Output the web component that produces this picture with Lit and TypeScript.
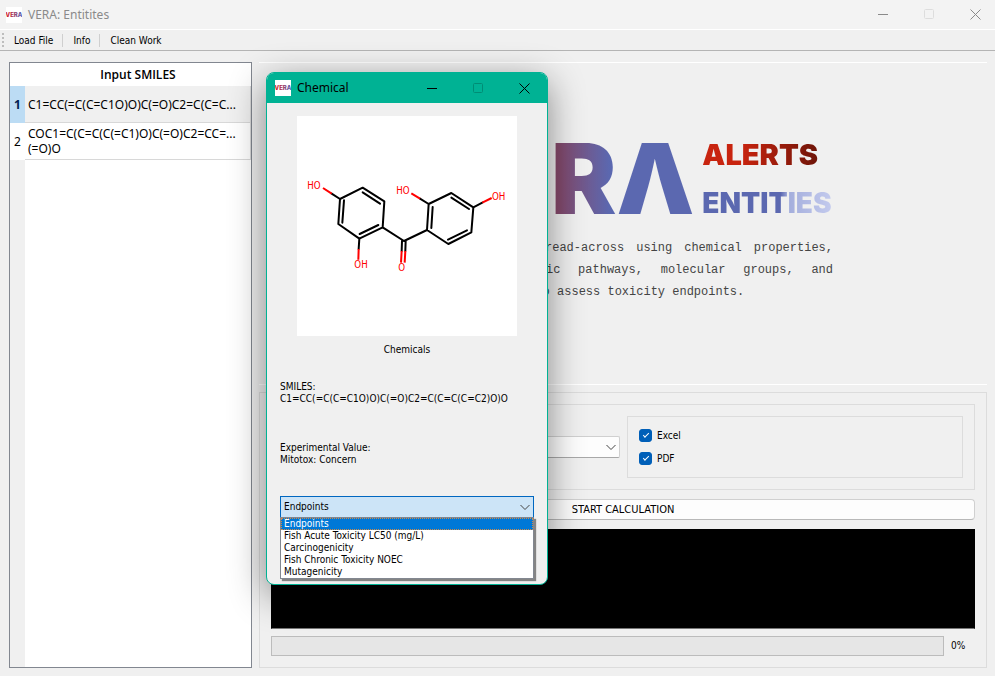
import { LitElement, html, css, svg } from "lit";
import { customElement, property, state } from "lit/decorators.js";
import { classMap } from "lit/directives/class-map.js";

@customElement("window-bar")
class WindowBar extends LitElement {
  @property() label = "";

  static styles = css`
    :host {
      display: flex;
      align-items: center;
      font: 12px/16px "Noto Sans", "Open Sans", sans-serif;
    }
    .icon {
      width: 16px;
      height: 16px;
      margin-right: 6px;
      background: #fff;
      flex: none;
    }
    .title {
      flex: 1;
    }
    button {
      all: unset;
      width: 46px;
      height: 28px;
      display: flex;
      align-items: center;
      justify-content: center;
    }
    .dim {
      opacity: 0.2;
    }
  `;

  render() {
    return html`
      <svg class="icon" viewBox="0 0 16 16" aria-hidden="true">
        <defs>
          <linearGradient id="g">
            <stop offset="0.2" stop-color="#c8202c" />
            <stop offset="1" stop-color="#4a60c0" />
          </linearGradient>
        </defs>
        <text x="8" y="10" text-anchor="middle" font-family="Inter, sans-serif" font-size="6" font-weight="800" fill="url(#g)">VERA</text>
      </svg>
      <span class="title">${this.label}</span>
      <button aria-label="Minimize">
        <svg width="11" height="11"><path d="M0 5.5h10" stroke="currentColor" /></svg>
      </button>
      <button aria-label="Maximize" disabled class="dim">
        <svg width="11" height="11"><rect x="0.5" y="0.5" width="9" height="9" rx="1" fill="none" stroke="currentColor" /></svg>
      </button>
      <button aria-label="Close">
        <svg width="11" height="11"><path d="M0.5 0.5l10 10M10.5 0.5l-10 10" stroke="currentColor" /></svg>
      </button>
    `;
  }
}

@customElement("molecule-view")
class MoleculeView extends LitElement {
  static styles = css`
    :host {
      display: block;
      width: 220px;
      height: 220px;
      background: #fff;
    }
    svg {
      display: block;
    }
    .bond {
      fill: none;
      stroke: #000;
      stroke-width: 6;
      stroke-linecap: round;
      stroke-linejoin: round;
    }
    .oxy {
      fill: none;
      stroke: #f00;
      stroke-width: 6;
    }
    text {
      font: 29px "DejaVu Sans Condensed", "Liberation Sans", sans-serif;
      font-stretch: condensed;
      fill: #f00;
    }
  `;

  render() {
    const labels: [number, number, string][] = [
      [34, 86, "HO"],
      [175, 325, "OH"],
      [307, 333, "O"],
      [301, 102, "HO"],
      [588, 119, "OH"],
    ];
    return html`
      <svg width="220" height="220" viewBox="3 -132 660 660" role="img" aria-label="Chemical structure">
        <path
          class="bond"
          d="M132 117L200 83L265 124L260 202L190 236L127 192Z M200 97L252 131 M247 195L191 222 M144 121L139 188
             M132 117L107 101 M190 236L188 267 M260 202L324 243L393 210
             M393 210L398 132L466 99L532 142L526 217L457 252Z M406 204L410 141 M466 113L519 147 M513 211L456 239
             M398 132L372 116 M532 142L559 128 M318 243L317 273 M329 243L328 273"
        />
        <path
          class="oxy"
          d="M107 101L81 84 M188 267L187 299 M317 273L315 308 M328 273L326 308 M372 116L346 100 M559 128L587 114"
        />
        ${labels.map(([x, y, t]) => svg`<text x=${x} y=${y}>${t}</text>`)}
      </svg>
    `;
  }
}

@customElement("chemical-dialog")
class ChemicalDialog extends LitElement {
  @state() selected = "Endpoints";

  private endpoints = [
    "Endpoints",
    "Fish Acute Toxicity LC50 (mg/L)",
    "Carcinogenicity",
    "Fish Chronic Toxicity NOEC",
    "Mutagenicity",
  ];

  static styles = css`
    :host {
      display: block;
      box-sizing: border-box;
      width: 282px;
      background: #f0f0f0;
      border: 1px solid #00b294;
      border-radius: 8px;
      font: 10px/12px "DejaVu Sans Condensed", "DejaVu Sans", sans-serif;
      font-stretch: condensed;
      box-shadow: 0 10px 36px rgba(0, 0, 0, 0.45);
    }
    .bar {
      height: 30px;
      padding-left: 8px;
      background: #00b294;
      border-radius: 7px 7px 0 0;
    }
    .content {
      display: flex;
      flex-direction: column;
      padding: 13px 13px 66px;
    }
    molecule-view {
      margin-left: 17px;
    }
    .caption {
      margin: 8px 0 25px;
      text-align: center;
    }
    p {
      margin: 0;
      white-space: nowrap;
    }
    .value {
      margin: 37px 0 30px;
    }
    .combo {
      position: relative;
    }
    select {
      appearance: none;
      display: block;
      box-sizing: border-box;
      width: 100%;
      height: 22px;
      padding: 0 3px;
      border: 1px solid #0067c0;
      border-radius: 0;
      background: #cce4f7;
      font: inherit;
      color: #000;
      outline: none;
    }
    .arrow {
      position: absolute;
      right: 4px;
      top: 8px;
      pointer-events: none;
    }
    ul {
      position: absolute;
      left: 0;
      right: 0;
      top: 21px;
      margin: 0;
      padding: 0;
      list-style: none;
      background: #fff;
      border: 1px solid #828790;
      box-shadow: 2px 2px 1px rgba(0, 0, 0, 0.45);
    }
    li {
      padding: 0 3px;
    }
    .current {
      background: #0078d7;
      color: #fff;
      outline: 1px dotted #d08a48;
      outline-offset: -1px;
    }
  `;

  render() {
    return html`
      <window-bar class="bar" label="Chemical"></window-bar>
      <div class="content">
        <molecule-view></molecule-view>
        <div class="caption">Chemicals</div>
        <p>SMILES:<br />C1=CC(=C(C=C1O)O)C(=O)C2=C(C=C(C=C2)O)O</p>
        <p class="value">Experimental Value:<br />Mitotox: Concern</p>
        <div class="combo">
          <select
            aria-label="Endpoints"
            .value=${this.selected}
            @change=${(e: Event) => (this.selected = (e.target as HTMLSelectElement).value)}
          >
            ${this.endpoints.map((e) => html`<option ?selected=${e === this.selected}>${e}</option>`)}
          </select>
          <svg class="arrow" width="10" height="7"><path d="M0.5 1l4.5 4.500L9.5 1" fill="none" stroke="#444" /></svg>
          <ul role="listbox" aria-label="Endpoint list">
            ${this.endpoints.map(
              (e) => html`<li
                role="option"
                aria-selected=${e === this.selected}
                class=${classMap({ current: e === this.selected })}
                @click=${() => (this.selected = e)}
              >${e}</li>`
            )}
          </ul>
        </div>
      </div>
    `;
  }
}

@customElement("app-root")
class AppRoot extends LitElement {
  static styles = css`
    :host {
      display: flex;
      flex-direction: column;
      position: relative;
      box-sizing: border-box;
      min-height: 100vh;
      overflow: clip;
      background: #f0f0f0;
      color: #000;
      font: 10px/12px "DejaVu Sans Condensed", "DejaVu Sans", sans-serif;
      font-stretch: condensed;
    }
    .bar {
      height: 29px;
      margin-right: -3px;
      padding-left: 6px;
      background: #f3f3f3;
      color: #8a8a8a;
      border-bottom: 1px solid #fff;
    }
    .tools {
      display: flex;
      align-items: center;
      height: 20px;
      padding-left: 2px;
      border-bottom: 1px solid #b4b4b4;
    }
    .grip {
      height: 14px;
      border-left: 2px dotted #bdbdbd;
    }
    .tools button {
      all: unset;
      padding: 1px 9px 0 10px;
    }
    .tools button + button {
      border-left: 1px solid #cfcfcf;
    }
    main {
      flex: 1;
      display: flex;
      gap: 7px;
      padding: 11px 8px 8px 9px;
    }
    .inputs {
      box-sizing: border-box;
      flex: 0 0 243px;
      border: 1px solid #828790;
      background: linear-gradient(90deg, #f0f0f0 15px, #fff 15px);
      font: 12px/15px "Noto Sans", "Open Sans", sans-serif;
    }
    table {
      width: 100%;
      table-layout: fixed;
      border-spacing: 0;
    }
    .num {
      width: 15px;
    }
    th,
    td {
      box-sizing: border-box;
      padding: 0;
      background: #fff;
    }
    thead th {
      height: 23px;
      font-weight: 600;
      font-family: "Open Sans", "Noto Sans", sans-serif;
    }
    tbody th {
      height: 37px;
      font-weight: 400;
    }
    td {
      padding: 0 3px;
      border: 1px solid #d8d8d8;
      border-width: 0 1px 1px 0;
      white-space: nowrap;
      overflow: hidden;
    }
    .active td {
      background: #f0f0f0;
    }
    .active th {
      background: #bcdcf4;
      font-weight: 700;
      color: #002050;
    }
    .work {
      flex: 1;
      min-width: 0;
      display: flex;
      flex-direction: column;
    }
    .hero {
      display: flex;
      flex-direction: column;
      align-items: center;
      padding: 78px 0 81px;
      margin-bottom: 7px;
      border-top: 1px solid #fff;
      border-bottom: 1px solid #fff;
    }
    .banner {
      width: 420px;
    }
    .logo {
      display: flex;
      justify-content: flex-end;
      gap: 8px;
      height: 76px;
      margin-bottom: 20px;
      font-family: Inter, sans-serif;
    }
    .big,
    .alerts,
    .entities {
      color: transparent;
      background-clip: text;
      -webkit-background-clip: text;
    }
    .big {
      font-size: 98px;
      line-height: 76px;
      font-weight: 900;
      background-image: linear-gradient(90deg, #c8201c, #844a6c 52%, #5b68b0 70%);
    }
    .words {
      display: flex;
      flex-direction: column;
      justify-content: space-between;
      width: 134px;
      font-size: 29px;
      line-height: 28px;
      font-weight: 900;
    }
    .alerts {
      background-image: linear-gradient(90deg, #c8240f 30%, #6c1408 90%);
    }
    .entities {
      font-size: 28px;
      background-image: linear-gradient(90deg, #5b68b0 60%, #a4aedc 66%, #c4cbee);
    }
    .pitch {
      font: 12px/22px "Liberation Mono", monospace;
      color: #444;
    }
    .pitch span {
      display: block;
      text-align-last: justify;
    }
    .pitch .last {
      text-align-last: left;
    }
    .panel {
      flex: 1;
      display: flex;
      flex-direction: column;
      padding: 11px;
      border: 1px solid #dcdcdc;
    }
    .options {
      display: flex;
      align-items: center;
      gap: 7px;
      padding: 11px;
      margin-bottom: 9px;
      border: 1px solid #dcdcdc;
    }
    .pick {
      position: relative;
      flex: 1;
    }
    .pick select {
      appearance: none;
      display: block;
      box-sizing: border-box;
      width: 100%;
      height: 22px;
      border: 1px solid #d0d0d0;
      border-bottom-color: #a8a8a8;
      border-radius: 2px;
      background: #fdfdfd;
      font: inherit;
    }
    .arrow {
      position: absolute;
      right: 4px;
      top: 8px;
      pointer-events: none;
    }
    .formats {
      box-sizing: border-box;
      width: 336px;
      display: flex;
      flex-direction: column;
      align-items: flex-start;
      gap: 10px;
      padding: 12px 11px;
      border: 1px solid #dcdcdc;
    }
    .formats label {
      display: flex;
      align-items: center;
      gap: 5px;
    }
    .formats input {
      appearance: none;
      width: 13px;
      height: 13px;
      margin: 0;
      border-radius: 3px;
      border: 1px solid #005fb8;
      display: grid;
      place-items: center;
    }
    .formats input:checked {
      background: #005fb8;
    }
    .formats input:checked::before {
      content: "";
      width: 5px;
      height: 2px;
      border-left: 1px solid #fff;
      border-bottom: 1px solid #fff;
      transform: translateY(-1px) rotate(-45deg);
    }
    .start {
      box-sizing: border-box;
      height: 21px;
      padding: 1px 0 0;
      margin-bottom: 9px;
      border: 1px solid #d0d0d0;
      border-bottom-color: #b8b8b8;
      border-radius: 4px;
      background: #fdfdfd;
      font: inherit;
      font-size: 11px;
      color: #000;
    }
    .log {
      flex: 1;
      min-height: 80px;
      margin-bottom: 7px;
      background: #000;
      border: 1px solid #000;
      border-bottom-color: #777;
    }
    .progress {
      display: flex;
      align-items: center;
      gap: 7px;
    }
    .track {
      flex: 1;
      height: 18px;
      border: 1px solid #bcbcbc;
      background: #e6e6e6;
    }
    .percent {
      width: 24px;
    }
    chemical-dialog {
      position: absolute;
      left: 266px;
      top: 72px;
    }
  `;

  render() {
    return html`
      <window-bar class="bar" label="VERA: Entitites"></window-bar>
      <nav class="tools">
        <span class="grip"></span>
        <button>Load File</button>
        <button>Info</button>
        <button>Clean Work</button>
      </nav>
      <main>
        <div class="inputs">
          <table>
            <colgroup><col class="num" /><col /></colgroup>
            <thead>
              <tr><th></th><th>Input SMILES</th></tr>
            </thead>
            <tbody>
              <tr class="active"><th>1</th><td>C1=CC(=C(C=C1O)O)C(=O)C2=C(C=C...</td></tr>
              <tr><th>2</th><td>COC1=C(C=C(C(=C1)O)C(=O)C2=CC=...<br />(=O)O</td></tr>
            </tbody>
          </table>
        </div>
        <section class="work">
          <div class="hero">
            <div class="banner">
              <div class="logo">
                <span class="big" aria-label="VERA">VERΛ</span>
                <div class="words">
                  <span class="alerts">ALERTS</span>
                  <span class="entities">ENTITIES</span>
                </div>
              </div>
              <div class="pitch">
                <span>VERA facilitates read-across using chemical properties,</span>
                <span>exploring metabolic pathways, molecular groups, and</span>
                <span class="last">structure alerts to assess toxicity endpoints.</span>
              </div>
            </div>
          </div>
          <div class="panel">
            <div class="options">
              <div class="pick">
                <select aria-label="Endpoint"></select>
                <svg class="arrow" width="10" height="7"><path d="M0.5 1l4.5 4.500L9.5 1" fill="none" stroke="#444" /></svg>
              </div>
              <div class="formats">
                <label><input type="checkbox" checked />Excel</label>
                <label><input type="checkbox" checked />PDF</label>
              </div>
            </div>
            <button class="start">START CALCULATION</button>
            <div class="log" role="log"></div>
            <div class="progress">
              <div class="track" role="progressbar" aria-label="Progress" aria-valuenow="0"></div>
              <span class="percent">0%</span>
            </div>
          </div>
        </section>
      </main>
      <chemical-dialog role="dialog" aria-label="Chemical"></chemical-dialog>
    `;
  }
}
